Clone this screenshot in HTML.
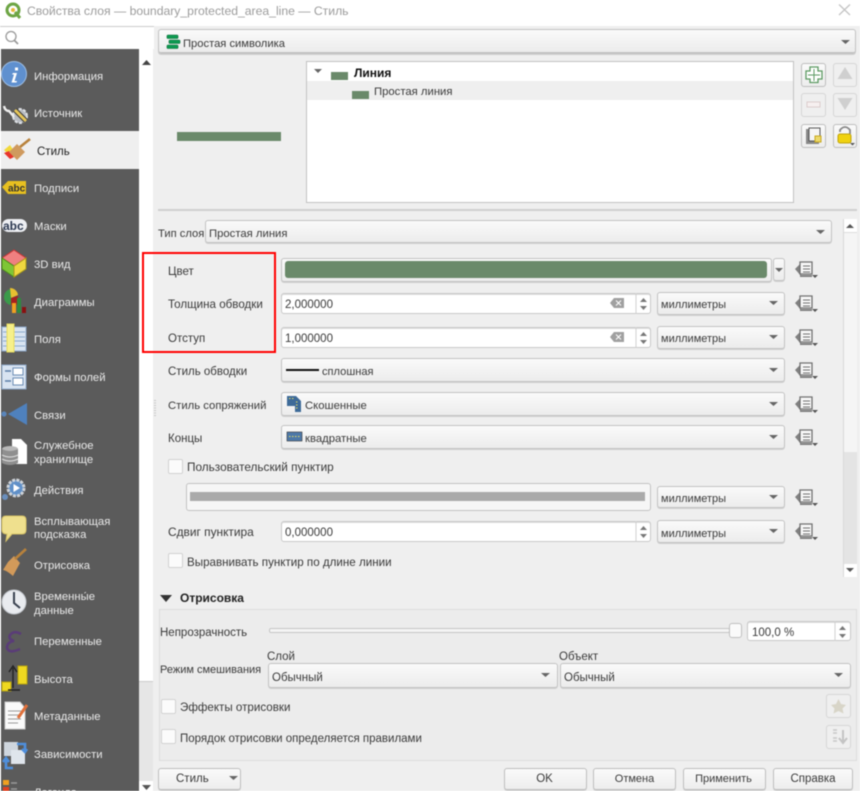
<!DOCTYPE html>
<html lang="ru"><head><meta charset="utf-8"><title>Свойства слоя</title>
<style>
html,body{margin:0;padding:0;background:#fff}
#r{position:relative;width:860px;height:791px;overflow:hidden;background:#efefef;font:11.5px "Liberation Sans","DejaVu Sans",sans-serif;color:#3a3a3a;filter:blur(.4px)}
#r div{position:absolute;box-sizing:border-box;white-space:nowrap}
.t{line-height:14px;height:14px;margin-top:1px}
.n{color:#eaeaea;left:34px;font-size:11.3px}
.u{font-size:11px}
.c{background:linear-gradient(#fafafa,#ececec);border:1px solid #c2c2c2;border-radius:3px;box-shadow:0 1px 0 #d0d0d0}
.i{background:#fff;border:1px solid #c8c8c8;border-radius:3px;box-shadow:inset 0 1px 0 #ddd}
.cb{background:#fbfbfb;border:1px solid #d2d2d2;border-radius:2px;width:15px;height:15px}
.b{background:linear-gradient(#fafafa,#ededed);border:1px solid #bebebe;border-radius:3px;text-align:center;line-height:21px;box-shadow:0 1px 0 #cecece}
svg{position:absolute;left:0;top:0}
</style></head><body><div id="r">
<div style="left:0;top:0;width:860px;height:26px;background:#fff"></div>
<div class="t" style="left:27px;top:2px;font-size:12.2px;color:#9c9c9c;line-height:16px;height:16px">Свойства слоя — boundary_protected_area_line — Стиль</div>

<div style="left:0;top:26px;width:154px;height:23px;background:#fff;border-top:1px solid #ccc"></div>
<div style="left:0;top:49px;width:1px;height:742px;background:#fff"></div>
<div style="left:1px;top:49px;width:138px;height:742px;background:#5b5b5b"></div>
<div style="left:139px;top:49px;width:14px;height:742px;background:#fff"></div>
<div style="left:139px;top:681px;width:14px;height:100px;background:#e6e6e6;border-top:1px solid #ccc"></div>
<div style="left:1px;top:131px;width:138px;height:38px;background:#efefef"></div>

<div class="t n" style="top:69px">Информация</div>
<div class="t n" style="top:106px">Источник</div>
<div class="t" style="left:37px;top:144px;color:#222">Стиль</div>
<div class="t n" style="top:181px">Подписи</div>
<div class="t n" style="top:219px">Маски</div>
<div class="t n" style="top:257px">3D вид</div>
<div class="t n" style="top:295px">Диаграммы</div>
<div class="t n" style="top:332px">Поля</div>
<div class="t n" style="top:370px">Формы полей</div>
<div class="t n" style="top:408px">Связи</div>
<div class="t n" style="top:438px">Служебное</div>
<div class="t n" style="top:452px">хранилище</div>
<div class="t n" style="top:483px">Действия</div>
<div class="t n" style="top:514px">Всплывающая</div>
<div class="t n" style="top:527px">подсказка</div>
<div class="t n" style="top:558px">Отрисовка</div>
<div class="t n" style="top:589px">Временны́е</div>
<div class="t n" style="top:603px">данные</div>
<div class="t n" style="top:634px">Переменные</div>
<div class="t n" style="top:672px">Высота</div>
<div class="t n" style="top:709px">Метаданные</div>
<div class="t n" style="top:747px">Зависимости</div>
<div class="t n" style="top:785px">Легенда</div>

<div class="c" style="left:158px;top:29px;width:698px;height:25px;border-width:1px 1px 2px"></div>
<div class="t" style="left:183px;top:36px;font-size:11.2px">Простая символика</div>

<div style="left:177px;top:132px;width:104px;height:9px;background:#6a8a6a"></div>
<div style="left:306px;top:61px;width:488px;height:142px;background:#fff;border:1px solid #c2c2c2"></div>
<div style="left:307px;top:81px;width:486px;height:19px;background:#efefef"></div>
<div style="left:331px;top:72px;width:17px;height:8px;background:#6a8a6a"></div>
<div style="left:352px;top:91px;width:17px;height:8px;background:#6a8a6a"></div>
<div class="t" style="left:354px;top:66px;font-size:12px;font-weight:bold;color:#111;margin-top:0">Линия</div>
<div class="t" style="left:374px;top:84px;font-size:11.3px">Простая линия</div>
<div style="left:158px;top:209px;width:699px;height:2px;background:#cfcfcf"></div>

<div class="t" style="left:158px;top:226px;font-size:11.2px">Тип слоя</div>
<div class="c" style="left:205px;top:220px;width:627px;height:23px"></div>
<div class="t" style="left:209px;top:226px;font-size:11.3px">Простая линия</div>

<div style="left:843px;top:219px;width:14px;height:358px;background:#f5f5f5;border-left:1px solid #d8d8d8"></div>
<div style="left:844px;top:219px;width:13px;height:14px;background:#fff;border-bottom:1px solid #ddd"></div>
<div style="left:844px;top:452px;width:13px;height:112px;background:#e4e4e4"></div>
<div style="left:844px;top:564px;width:13px;height:13px;background:#fff"></div>

<div style="left:142px;top:252px;width:134px;height:101px;border:2px solid #f00"></div>
<div class="t" style="left:168px;top:264px">Цвет</div>
<div class="t" style="left:168px;top:297px;font-size:11.6px">Толщина обводки</div>
<div class="t" style="left:168px;top:331px">Отступ</div>
<div class="t" style="left:168px;top:364px">Стиль обводки</div>
<div class="t" style="left:168px;top:398px;font-size:11.3px">Стиль сопряжений</div>
<div class="t" style="left:168px;top:431px">Концы</div>

<div class="c" style="left:281px;top:258px;width:491px;height:24px"></div>
<div style="left:285px;top:261px;width:482px;height:17px;background:#6a8a6a;border-radius:3px"></div>
<div class="c" style="left:773px;top:258px;width:12px;height:23px"></div>

<div class="i" style="left:281px;top:293px;width:370px;height:21px"></div>
<div class="t" style="left:285px;top:297px">2,000000</div>
<div class="i" style="left:281px;top:327px;width:370px;height:21px"></div>
<div class="t" style="left:285px;top:331px">1,000000</div>
<div class="c" style="left:657px;top:292px;width:128px;height:23px"></div>
<div class="t u" style="left:661px;top:297px">миллиметры</div>
<div class="c" style="left:657px;top:326px;width:128px;height:23px"></div>
<div class="t u" style="left:661px;top:331px">миллиметры</div>

<div class="c" style="left:281px;top:358px;width:504px;height:24px"></div>
<div style="left:286px;top:369px;width:33px;height:2px;background:#111"></div>
<div class="t" style="left:322px;top:364px;font-size:11.1px">сплошная</div>
<div class="c" style="left:281px;top:392px;width:504px;height:24px"></div>
<div class="t" style="left:305px;top:398px;font-size:11.3px">Скошенные</div>
<div class="c" style="left:281px;top:425px;width:504px;height:24px"></div>
<div class="t" style="left:305px;top:431px;font-size:11.3px">квадратные</div>

<div class="cb" style="left:168px;top:459px"></div>
<div class="t" style="left:187px;top:460px;font-size:11.8px;margin-top:0">Пользовательский пунктир</div>
<div class="c" style="left:186px;top:483px;width:465px;height:28px;background:#f6f6f6;box-shadow:none"></div>
<div style="left:190px;top:492px;width:455px;height:9px;background:#aaa"></div>
<div class="c" style="left:657px;top:486px;width:128px;height:22px"></div>
<div class="t u" style="left:661px;top:491px">миллиметры</div>

<div class="t" style="left:168px;top:525px;font-size:11.9px;margin-top:0">Сдвиг пунктира</div>
<div class="i" style="left:281px;top:521px;width:370px;height:21px"></div>
<div class="t" style="left:285px;top:525px">0,000000</div>
<div class="c" style="left:657px;top:520px;width:128px;height:23px"></div>
<div class="t u" style="left:661px;top:526px">миллиметры</div>
<div class="cb" style="left:168px;top:553px"></div>
<div class="t" style="left:187px;top:555px;font-size:11.6px">Выравнивать пунктир по длине линии</div>

<div class="t" style="left:180px;top:591px;font-size:12px;font-weight:bold;color:#222;margin-top:0">Отрисовка</div>
<div style="left:159px;top:609px;width:698px;height:152px;background:#ececec;border:1px solid #dcdcdc"></div>

<div class="t" style="left:160px;top:625px">Непрозрачность</div>
<div style="left:269px;top:628px;width:461px;height:5px;background:#f4f4f4;border:1px solid #c6c6c6;border-radius:2px"></div>
<div style="left:729px;top:623px;width:13px;height:15px;background:#fafafa;border:1px solid #c0c0c0;border-radius:3px"></div>
<div class="i" style="left:747px;top:621px;width:104px;height:20px"></div>
<div class="t" style="left:752px;top:625px">100,0 %</div>

<div class="t" style="left:160px;top:662px;font-size:11px">Режим смешивания</div>
<div class="t" style="left:267px;top:649px">Слой</div>
<div class="t" style="left:559px;top:649px">Объект</div>
<div class="c" style="left:268px;top:663px;width:290px;height:25px"></div>
<div class="t" style="left:272px;top:670px">Обычный</div>
<div class="c" style="left:560px;top:663px;width:291px;height:25px"></div>
<div class="t" style="left:564px;top:670px">Обычный</div>

<div class="cb" style="left:161px;top:699px"></div>
<div class="t" style="left:180px;top:700px;font-size:11.6px">Эффекты отрисовки</div>
<div class="cb" style="left:161px;top:729px"></div>
<div class="t" style="left:180px;top:731px">Порядок отрисовки определяется правилами</div>
<div class="b" style="left:826px;top:694px;width:25px;height:24px;background:#efefef;border-color:#d5d5d5;box-shadow:none"></div>
<div class="b" style="left:826px;top:725px;width:25px;height:24px;background:#efefef;border-color:#d5d5d5;box-shadow:none"></div>

<div class="b" style="left:158px;top:768px;width:83px;height:22px;text-align:left;padding-left:17px">Стиль</div>
<div class="b" style="left:504px;top:768px;width:83px;height:22px;padding-right:2px">OK</div>
<div class="b" style="left:593px;top:768px;width:83px;height:22px;font-size:11px">Отмена</div>
<div class="b" style="left:683px;top:768px;width:83px;height:22px;font-size:11px;padding-right:2px">Применить</div>
<div class="b" style="left:773px;top:768px;width:80px;height:22px">Справка</div>

<div class="b" style="left:801px;top:63px;width:25px;height:24px;box-shadow:none"></div>
<div class="b" style="left:833px;top:63px;width:24px;height:24px;background:#efefef;border-color:#d5d5d5;box-shadow:none"></div>
<div class="b" style="left:801px;top:93px;width:25px;height:24px;background:#efefef;border-color:#d5d5d5;box-shadow:none"></div>
<div class="b" style="left:833px;top:93px;width:24px;height:24px;background:#efefef;border-color:#d5d5d5;box-shadow:none"></div>
<div class="b" style="left:801px;top:124px;width:25px;height:24px;box-shadow:none"></div>
<div class="b" style="left:833px;top:124px;width:24px;height:24px;box-shadow:none"></div>

<svg width="860" height="791" viewBox="0 0 860 791">
<defs>
<g id="dd"><path d="M0 8 6 2V15Z" fill="#808080"/><path d="M5 1H17V13H5Z" fill="#f8f8f8" stroke="#707070" stroke-width="1.300"/><path d="M8 5H15M8 8H15M8 11H15" stroke="#707070" stroke-width="1.100"/><path d="M5 14H17V16H5Z" fill="#808080"/><path d="M17 14H23L20 17Z" fill="#555"/></g>
<path id="dn" d="M0 0H9L4.5 4Z" fill="#666"/>
<g id="sp"><path d="M4.5 0 8 4H1Z" fill="#777"/><path d="M1 8H8L4.5 12Z" fill="#777"/></g>
</defs>

<!-- title -->
<circle cx="13" cy="10" r="6" fill="none" stroke="#6da544" stroke-width="3"/><path d="M15 12 20 18" stroke="#6da544" stroke-width="3"/><circle cx="13" cy="10" r="2" fill="#e8b93a"/>
<path d="M839 4.500 850 15M850 4.500 839 15" stroke="#c4c4c4" stroke-width="1.300"/>
<circle cx="11" cy="36.500" r="5" fill="none" stroke="#999" stroke-width="1.300"/><path d="M14.500 40.500 18 44" stroke="#999" stroke-width="1.700"/>
<path d="M142 65 146.500 60 151 65Z" fill="#444"/><path d="M142 785H151L146.500 790Z" fill="#555"/>

<!-- sidebar icons -->
<circle cx="14" cy="74" r="12.500" fill="#5f90cf" stroke="#9dbde3"/><path d="M15 67.500h3v3h-3zM13 73h4l-2.500 8h2.500l-.5 1.500h-5l2.500-8h-2z" fill="#fff"/>
<circle cx="20" cy="116" r="7" fill="#b8bcc2" stroke="#dfe2e6" stroke-width="2" stroke-dasharray="3 1.500"/><path d="M15 110 26 121" stroke="#3a3a3a" stroke-width="5"/><path d="M15 110 26 121" stroke="#e6c65a" stroke-width="3"/><path d="M4 106Q5 111 9 111L14 117" stroke="#eee" stroke-width="2.400" fill="none"/>
<path d="M4 150 10 145 14 151 9 155Z" fill="#f2d93a"/><path d="M4 153 9 151 14 157 10 159Z" fill="#e8342c"/><path d="M9 152 17 144 25 152 17 160Z" fill="#cf9a5e"/><path d="M20 147 30 139" stroke="#b8823c" stroke-width="2.600"/>
<path d="M2 187 8 181H26V194H8Z" fill="#e8c020"/><text x="8" y="191.500" font-family="Liberation Sans" font-weight="bold" font-size="10" fill="#333">abc</text>
<rect x="2" y="219" width="25" height="13" rx="6.500" fill="#eef0f4"/><text x="3" y="230" font-family="Liberation Sans" font-weight="bold" font-size="12" fill="#2d3a52">abc</text>
<path d="M14 250 26 258 14 266 2 258Z" fill="#f08080" stroke="#c33"/><path d="M2 258 14 266V277L2 269Z" fill="#7ec636" stroke="#4a8a1a"/><path d="M26 258 14 266V277L26 269Z" fill="#f0d840" stroke="#a89a1a"/>
<path d="M11 289A8 8 0 0 0 4 297 8 8 0 0 0 11 305Z" fill="#3a9a4a"/><path d="M10 288A8 8 0 0 1 18 295L11 298Z" fill="#e8c030"/><path d="M11 298 18 296V304Q15 306 11 305Z" fill="#a82020"/><rect x="12" y="303" width="4" height="10" fill="#f0a020"/><rect x="17" y="298" width="4" height="15" fill="#2e8a3e"/><rect x="22" y="307" width="4" height="6" fill="#8a1010"/>
<rect x="2" y="327" width="24" height="24" fill="#d9e4f1" stroke="#8eaacb"/><path d="M3 332H25M3 337H25M3 341H25M3 346H25" stroke="#8eaacb"/><rect x="7" y="324" width="7" height="28" fill="#f6f08a" stroke="#e8dc60"/>
<rect x="2" y="365" width="24" height="24" fill="#d9e4f1" stroke="#8eaacb"/><rect x="13" y="368" width="10" height="7" fill="#fff" stroke="#6b8db5"/><rect x="13" y="378" width="10" height="7" fill="#fff" stroke="#6b8db5"/><path d="M5 371H11M5 381H11" stroke="#5a7da8" stroke-width="1.500"/>
<path d="M27 403V425L8 414Z" fill="#4f81bd"/><circle cx="4" cy="414" r="2.600" fill="#5b86bb"/>
<path d="M12 439H21L27 445V464H12Z" fill="#fff"/><ellipse cx="10" cy="449" rx="8" ry="3" fill="#b8b8b8"/><path d="M2 449V463Q10 467 18 463V449Q10 453 2 449Z" fill="#8f8f8f"/><path d="M2 455Q10 459 18 455M2 459Q10 463 18 459" stroke="#e0e0e0" fill="none"/>
<circle cx="16" cy="488" r="8" fill="#6090c8" stroke="#cfd3d8" stroke-width="3" stroke-dasharray="3 1.200"/><path d="M13.500 484 20 488 13.500 492Z" fill="#fff"/><circle cx="5" cy="497" r="3" fill="#6a8fbd"/>
<path d="M6 516H22Q26 516 26 520V530Q26 534 22 534H12L6 541 7 534Q2 534 2 530V520Q2 516 6 516Z" fill="#efe08e" stroke="#d8c468"/>
<path d="M8 562 14 556 20 563 13 576Q6 570 3 570Z" fill="#d29a5a"/><path d="M15 559 26 549" stroke="#b8823c" stroke-width="2.600"/>
<circle cx="14" cy="602" r="12" fill="#e9ebef" stroke="#c4c8ce"/><path d="M14 592V603L20 608" stroke="#3a4250" stroke-width="2" fill="none"/>
<path d="M21 634Q14 630 10 635 8 639 14 641 7 642 7 648 9 654 20 649" stroke="#5a3c78" stroke-width="2.600" fill="none"/>
<rect x="18" y="666" width="9" height="18" fill="#efd820" stroke="#b8a410"/><rect x="2" y="682" width="9" height="9" fill="#efd820" stroke="#b8a410"/><path d="M13 688V668M9 672 13 666 17 672M8 690H20" stroke="#222" stroke-width="1.400" fill="none"/>
<path d="M5 702H20L25 708V729H5Z" fill="#fafafa" stroke="#ccc"/><path d="M8 711H21M8 715H21M8 719H21M8 723H18" stroke="#999"/><path d="M18 718 27 705" stroke="#e0703a" stroke-width="3"/>
<rect x="4" y="742" width="14" height="14" fill="#cfd6de"/><rect x="11" y="750" width="14" height="14" fill="#dfe5ec"/><path d="M17 744H25V750M27 749 25 752 22 749" stroke="#4f8fdc" stroke-width="2.600" fill="none"/><path d="M13 768H6V760M3 762 6 758 9 762" stroke="#4f8fdc" stroke-width="2.600" fill="none"/>
<rect x="3" y="780" width="6" height="5" fill="#f0a020"/><rect x="3" y="787" width="6" height="4" fill="#e04020"/><path d="M11 783H17M11 789H17" stroke="#999" stroke-width="1.400"/>

<!-- top combo -->
<rect x="167" y="35" width="11" height="3.500" rx="1" fill="#0c9a50" stroke="#056a35" stroke-width=".6"/><rect x="169" y="40" width="11" height="3.500" rx="1" fill="#0c9a50" stroke="#056a35" stroke-width=".6"/><rect x="167" y="45" width="11" height="3.500" rx="1" fill="#0c9a50" stroke="#056a35" stroke-width=".6"/>
<use href="#dn" x="841" y="40"/>
<path d="M314 69H322L318 73Z" fill="#666"/>

<!-- tree buttons -->
<path d="M810 67H818V71H822V79H818V82.500H810V79H806V71H810Z" fill="#fff" stroke="#5c9a62" stroke-width="1.300"/><path d="M814 69V81M808 75H820" stroke="#5c9a62"/>
<path d="M845 67 852.500 79H837.500Z" fill="#cfcfcf"/><path d="M837.500 98H852.500L845 110Z" fill="#cfcfcf"/>
<rect x="807" y="102" width="13" height="5" fill="#f6f0f0" stroke="#dccccc"/>
<rect x="806" y="129" width="13" height="15" fill="#888"/><rect x="809" y="128" width="11" height="13" fill="#f5f5f5" stroke="#555"/><rect x="815" y="136" width="6" height="6" fill="#ecd96a" stroke="#c8a820"/>
<path d="M840 132V130Q845 124 850 130V134" stroke="#888" stroke-width="1.800" fill="none"/><rect x="838" y="134" width="13" height="9" rx="2" fill="#f0d210" stroke="#c0a40c"/><path d="M850 143H855L852.500 145.500Z" fill="#555"/>

<!-- combo arrows -->
<use href="#dn" x="816" y="230"/>
<path d="M775 268H783L779 272Z" fill="#666"/>
<use href="#dn" x="769" y="301"/><use href="#dn" x="769" y="335"/><use href="#dn" x="769" y="368"/><use href="#dn" x="769" y="402"/><use href="#dn" x="769" y="435"/><use href="#dn" x="769" y="495"/><use href="#dn" x="769" y="529"/>
<use href="#dn" x="541" y="673"/><use href="#dn" x="834" y="673"/><use href="#dn" x="229" y="776"/>

<!-- spinners -->
<path d="M636 293V314M636 327V348M636 521V542M835 621V641" stroke="#d0d0d0"/>
<use href="#sp" x="639" y="298"/><use href="#sp" x="639" y="332"/><use href="#sp" x="639" y="526"/><use href="#sp" x="838" y="626"/>
<path d="M610 303 614 298H624V308H614Z" fill="#a0a0a0"/><path d="M616 300.500 621 305.500M621 300.500 616 305.500" stroke="#fff"/>
<path d="M610 337 614 332H624V342H614Z" fill="#a0a0a0"/><path d="M616 334.500 621 339.500M621 334.500 616 339.500" stroke="#fff"/>

<!-- scrollbar arrows -->
<path d="M846 228 850 224 854 228Z" fill="#555"/><path d="M846 568H854L850 572Z" fill="#555"/>
<path d="M155 400V417" stroke="#c8c8c8" stroke-dasharray="1 1.500" stroke-width="2"/>

<!-- join/cap icons -->
<path d="M287 396H296L301 401V412H295V406H287Z" fill="#3d6a98"/><path d="M289 398.500h1.500M292 398.500h1.500M296 402h1.500M296 405h1.500M296 408h1.500" stroke="#e8dc60"/>
<rect x="287" y="432" width="15" height="9" fill="#4d78a8" stroke="#333" stroke-width=".6"/><path d="M289 436.500H300" stroke="#e8dc60" stroke-dasharray="1.500 1.500"/>

<!-- section triangle -->
<path d="M160 595H172L166 602Z" fill="#333"/>

<!-- bottom right disabled -->
<path d="M838.500 699 841 704 846 705 842.500 708.500 843.500 713.500 838.500 711 833.500 713.500 834.500 708.500 831 705 836 704Z" fill="#d8d5c8"/>
<path d="M833 730H837M833 733H837M833 738H837M833 741H837" stroke="#c8c8c8" stroke-width="1.500"/><path d="M843 730V742M839 738 843 743 847 738" stroke="#c4c4c4" stroke-width="2" fill="none"/>

<!-- data defined buttons -->
<use href="#dd" x="795" y="261"/><use href="#dd" x="795" y="295"/><use href="#dd" x="795" y="329"/><use href="#dd" x="795" y="362"/><use href="#dd" x="795" y="396"/><use href="#dd" x="795" y="429"/><use href="#dd" x="795" y="489"/><use href="#dd" x="795" y="523"/>
</svg>
</div></body></html>
